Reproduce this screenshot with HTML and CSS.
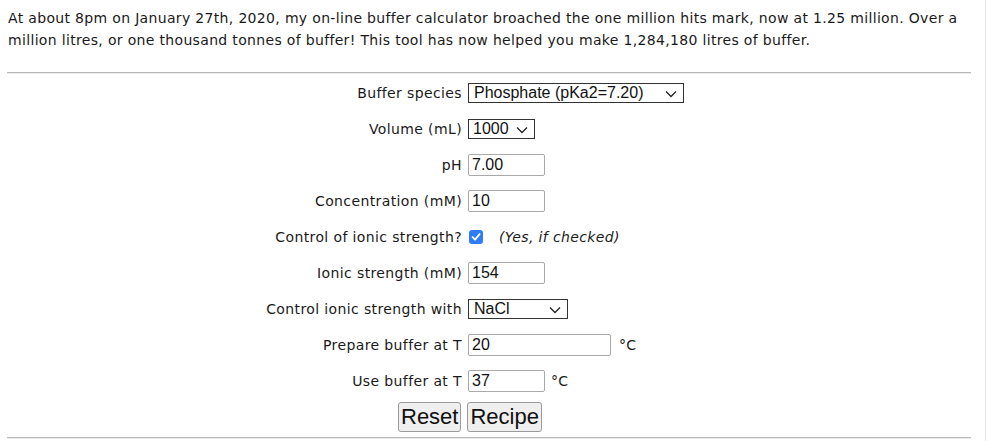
FILE: index.html
```html
<!DOCTYPE html>
<html>
<head>
<meta charset="utf-8">
<link rel="stylesheet" href="styles.css">
</head>
<body>
<div class="page">
  <p class="intro">At about 8pm on January 27th, 2020, my on-line buffer calculator broached the one million hits mark, now at 1.25 million. Over a<br>million litres, or one thousand tonnes of buffer! This tool has now helped you make 1,284,180 litres of buffer.</p>
  <hr class="rule">
  <form class="calc">
    <label class="lbl">Buffer species</label>
    <div class="cell"><span class="sel sel-species"><span class="sel-text">Phosphate (pKa2=7.20)</span><svg class="chev" width="12" height="8" viewBox="0 0 12 8"><path d="M1 1.5 L6 6.5 L11 1.5" fill="none" stroke="#222" stroke-width="1.3"/></svg></span></div>

    <label class="lbl">Volume (mL)</label>
    <div class="cell"><span class="sel sel-vol"><span class="sel-text">1000</span><svg class="chev" width="12" height="8" viewBox="0 0 12 8"><path d="M1 1.5 L6 6.5 L11 1.5" fill="none" stroke="#222" stroke-width="1.3"/></svg></span></div>

    <label class="lbl">pH</label>
    <div class="cell"><input class="txt" type="text" value="7.00"></div>

    <label class="lbl">Concentration (mM)</label>
    <div class="cell"><input class="txt" type="text" value="10"></div>

    <label class="lbl">Control of ionic strength?</label>
    <div class="cell"><span class="check"><svg width="10" height="10" viewBox="0 0 10 10"><path d="M1.6 5.2 L4 7.6 L8.6 2.2" fill="none" stroke="#fff" stroke-width="1.8" stroke-linecap="round" stroke-linejoin="round"/></svg></span><em class="hint">(Yes, if checked)</em></div>

    <label class="lbl">Ionic strength (mM)</label>
    <div class="cell"><input class="txt" type="text" value="154"></div>

    <label class="lbl">Control ionic strength with</label>
    <div class="cell"><span class="sel sel-salt"><span class="sel-text">NaCl</span><svg class="chev" width="12" height="8" viewBox="0 0 12 8"><path d="M1 1.5 L6 6.5 L11 1.5" fill="none" stroke="#222" stroke-width="1.3"/></svg></span></div>

    <label class="lbl">Prepare buffer at T</label>
    <div class="cell"><input class="txt txt-wide" type="text" value="20"><span class="unit unit-wide">°C</span></div>

    <label class="lbl">Use buffer at T</label>
    <div class="cell"><input class="txt" type="text" value="37"><span class="unit">°C</span></div>

    <div class="buttons"><button type="button" class="btn">Reset</button><button type="button" class="btn">Recipe</button></div>
  </form>
  <hr class="rule rule-bottom">
</div>
</body>
</html>
```
FILE: styles.css
```css
html, body {
  margin: 0;
  padding: 0;
  background: #fff;
}
body {
  font-family: "DejaVu Sans", Verdana, sans-serif;
  font-size: 14px;
  color: #1a1a1a;
}
.page {
  width: 964px;
  padding: 7px 14px 0 7px;
  border-right: 1px solid #e6e6e6;
  height: 434px;
}
.intro {
  margin: 0 0 0 1px;
  line-height: 22px;
  white-space: nowrap;
  letter-spacing: 0.33px;
}
.rule {
  border: 0;
  border-top: 1px solid #b8b8b8;
  border-bottom: 1px solid #ececec;
  margin: 21px 0 0 0;
  height: 0;
}
.rule-bottom {
  margin-top: 2px;
}
.calc {
  display: grid;
  grid-template-columns: 455px 1fr;
  grid-auto-rows: 36px;
  column-gap: 6px;
  align-items: center;
  margin-top: 1px;
}
.lbl {
  text-align: right;
  white-space: nowrap;
  letter-spacing: 0.38px;
}
.cell {
  display: flex;
  align-items: center;
}
.sel {
  position: relative;
  display: inline-flex;
  align-items: center;
  height: 18px;
  border: 1px solid #333;
  background: #fff;
  font-family: "Liberation Sans", Arial, sans-serif;
  font-size: 16px;
  color: #111;
  padding-left: 5px;
  box-sizing: content-box;
}
.sel-text {
  line-height: 18px;
}
.chev {
  position: absolute;
  right: 6px;
  top: 6px;
}
.sel-species { width: 209px; }
.sel-vol { width: 61px; padding-left: 4px; }
.sel-salt { width: 93px; }
.txt {
  box-sizing: border-box;
  width: 77px;
  height: 22px;
  border: 1px solid #a9a9a9;
  border-radius: 2px;
  padding: 0 3px;
  font-family: "Liberation Sans", Arial, sans-serif;
  font-size: 16px;
  color: #111;
  margin: 0;
}
.txt-wide {
  width: 143px;
}
.unit {
  margin-left: 6px;
  letter-spacing: 0.3px;
}
.unit-wide {
  margin-left: 8px;
}
.check {
  display: inline-flex;
  align-items: center;
  justify-content: center;
  width: 14px;
  height: 14px;
  border-radius: 3px;
  background: #2f7cf6;
  margin-left: 1px;
}
.hint {
  margin-left: 16px;
  font-style: italic;
  letter-spacing: 0.38px;
}
.buttons {
  grid-column: 1 / span 2;
  display: flex;
  justify-content: flex-start;
  padding-left: 391px;
  gap: 6px;
}
.btn {
  font-family: "Liberation Sans", Arial, sans-serif;
  font-size: 22px;
  height: 30px;
  padding: 0 2px;
  border: 1px solid #9a9a9a;
  border-radius: 3px;
  background: #efefef;
  color: #111;
  line-height: 28px;
  margin: 0;
}
```
